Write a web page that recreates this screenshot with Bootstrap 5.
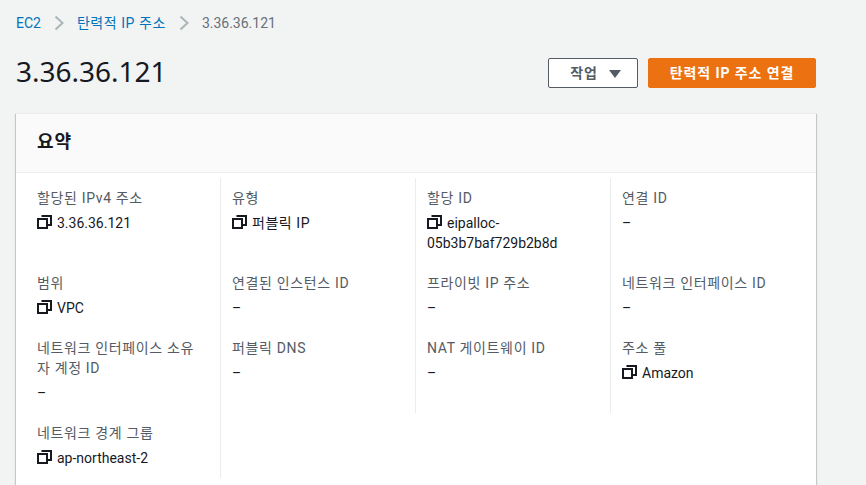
<!doctype html>
<html lang="ko">
<head>
<meta charset="utf-8">
<link href="https://cdn.jsdelivr.net/npm/bootstrap@5.3.0/dist/css/bootstrap.min.css" rel="stylesheet">
<style>
html,body{height:485px;overflow:hidden}
body{background:#f2f3f3;color:#16191f;font:14px/20px Roboto,"Noto Sans CJK KR",sans-serif}
.shell{width:800px;margin-left:16px}
.crumbs{height:46px;color:#687078}
.crumbs a{color:#0073bb;text-decoration:none}
.crumbs svg{margin:0 13px}
.ko{letter-spacing:.55px}
.ttl{font:400 28px/36px "Noto Sans","Noto Sans CJK KR",sans-serif;margin:-2px 0 0}
.headrow{height:52px;margin-bottom:15px}
.btnset{gap:10px;padding-top:2px}
.act{height:30px;border-radius:2px;font:700 14px/20px Roboto,"Noto Sans CJK KR",sans-serif;padding:0;letter-spacing:.9px}
.act-w{width:90px;background:#fff;border:1px solid #545b64;color:#545b64;padding-left:5px}
.act-o{width:168px;background:#ec7211;border:1px solid #ec7211;color:#fff}
.tri{display:inline-block;width:0;height:0;border-left:6px solid transparent;border-right:6px solid transparent;border-top:8px solid #545b64;margin-left:11px;vertical-align:0}
.panel{background:#fff;box-shadow:0 1px 1px 0 rgba(0,28,36,.3),1px 1px 1px 0 rgba(0,28,36,.15),-1px 1px 1px 0 rgba(0,28,36,.15);border-top:1px solid #eaeded;height:390px}
.phead{height:59px;background:#fafafa;border-bottom:1px solid #eaeded;padding:0 21px 2px;font-size:18px;font-weight:700;letter-spacing:1px;display:flex;align-items:center}
.grid4{display:grid;grid-template-columns:repeat(4,195px);margin:5px 0 0 9px}
.cell{padding:10px 11px;border-left:1px solid #eaeded}
.cell.first{border-left:0;padding-left:12px;padding-right:20px}
.lbl{color:#545b64;margin-bottom:5px;letter-spacing:.65px}
.val svg{margin-right:5px;vertical-align:-1px}
</style>
</head>
<body>
<div class="shell">
  <nav class="crumbs d-flex align-items-center">
    <a href="#">EC2</a>
    <svg width="10" height="16" viewBox="0 0 10 16" fill="none" stroke="#aab7b8" stroke-width="2"><path d="M1.500 1.500 8.500 8l-7 6.500"/></svg>
    <a href="#" class="ko">탄력적 IP 주소</a>
    <svg width="10" height="16" viewBox="0 0 10 16" fill="none" stroke="#aab7b8" stroke-width="2"><path d="M1.500 1.500 8.500 8l-7 6.500"/></svg>
    <span>3.36.36.121</span>
  </nav>
  <div class="headrow d-flex justify-content-between align-items-center">
    <h1 class="ttl">3.36.36.121</h1>
    <div class="d-flex btnset">
      <button type="button" class="btn act act-w">작업<span class="tri"></span></button>
      <button type="button" class="btn act act-o">탄력적 IP 주소 연결</button>
    </div>
  </div>
  <section class="panel">
    <div class="phead">요약</div>
    <div class="grid4">
      <div class="cell first"><div class="lbl">할당된 IPv4 주소</div><div class="val"><svg width="15" height="14" viewBox="0 0 15 14" fill="none" stroke="#16191f" stroke-width="2"><rect x="1" y="4" width="9" height="9"/><path d="M4.500 1H14v9h-4"/></svg>3.36.36.121</div></div>
      <div class="cell"><div class="lbl">유형</div><div class="val"><svg width="15" height="14" viewBox="0 0 15 14" fill="none" stroke="#16191f" stroke-width="2"><rect x="1" y="4" width="9" height="9"/><path d="M4.500 1H14v9h-4"/></svg><span class="ko">퍼블릭 IP</span></div></div>
      <div class="cell"><div class="lbl">할당 ID</div><div class="val"><svg width="15" height="14" viewBox="0 0 15 14" fill="none" stroke="#16191f" stroke-width="2"><rect x="1" y="4" width="9" height="9"/><path d="M4.500 1H14v9h-4"/></svg>eipalloc-<br>05b3b7baf729b2b8d</div></div>
      <div class="cell"><div class="lbl">연결 ID</div><div class="val">–</div></div>

      <div class="cell first"><div class="lbl">범위</div><div class="val"><svg width="15" height="14" viewBox="0 0 15 14" fill="none" stroke="#16191f" stroke-width="2"><rect x="1" y="4" width="9" height="9"/><path d="M4.500 1H14v9h-4"/></svg>VPC</div></div>
      <div class="cell"><div class="lbl">연결된 인스턴스 ID</div><div class="val">–</div></div>
      <div class="cell"><div class="lbl">프라이빗 IP 주소</div><div class="val">–</div></div>
      <div class="cell"><div class="lbl">네트워크 인터페이스 ID</div><div class="val">–</div></div>

      <div class="cell first"><div class="lbl">네트워크 인터페이스 소유자 계정 ID</div><div class="val">–</div></div>
      <div class="cell"><div class="lbl">퍼블릭 DNS</div><div class="val">–</div></div>
      <div class="cell"><div class="lbl">NAT 게이트웨이 ID</div><div class="val">–</div></div>
      <div class="cell"><div class="lbl">주소 풀</div><div class="val"><svg width="15" height="14" viewBox="0 0 15 14" fill="none" stroke="#16191f" stroke-width="2"><rect x="1" y="4" width="9" height="9"/><path d="M4.500 1H14v9h-4"/></svg>Amazon</div></div>

      <div class="cell first"><div class="lbl">네트워크 경계 그룹</div><div class="val"><svg width="15" height="14" viewBox="0 0 15 14" fill="none" stroke="#16191f" stroke-width="2"><rect x="1" y="4" width="9" height="9"/><path d="M4.500 1H14v9h-4"/></svg>ap-northeast-2</div></div>
      <div class="cell"></div>
    </div>
  </section>
</div>
</body>
</html>
